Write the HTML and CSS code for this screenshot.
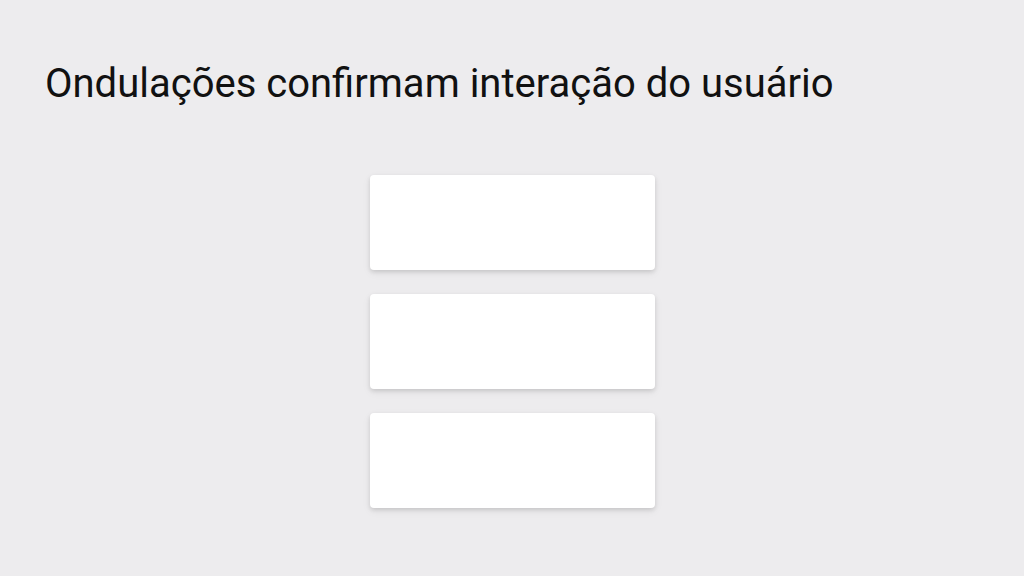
FILE: index.html
```html
<!DOCTYPE html>
<html lang="pt">
<head>
  <meta charset="UTF-8">
  <title>Ondulações</title>
  <link rel="stylesheet" href="styles.css">
</head>
<body>
  <div class="screen">
    <h1 class="title">Ondulações confirmam interação do usuário</h1>
    <div class="card-list">
      <div class="card"></div>
      <div class="card"></div>
      <div class="card"></div>
    </div>
  </div>
</body>
</html>
```

FILE: styles.css
```css
* { box-sizing: border-box; }

body {
  margin: 0;
  background: #edecee;
  font-family: Roboto, sans-serif;
}

.screen {
  width: 1024px;
  height: 576px;
  padding: 60px 0 0 45px;
}
  .title {
    margin: 0;
    font-size: 40px;
    font-weight: 400;
    line-height: 48px;
    color: #111;
  }
  .card-list {
    display: flex;
    flex-direction: column;
    gap: 24px;
    width: 285px;
    margin: 67px 0 0 325px;
  }
    .card {
      height: 95px;
      background: #fff;
      border-radius: 4px;
      box-shadow: 0 2px 4px rgba(0,0,0,0.12), 0 3px 10px rgba(0,0,0,0.06);
    }
```
